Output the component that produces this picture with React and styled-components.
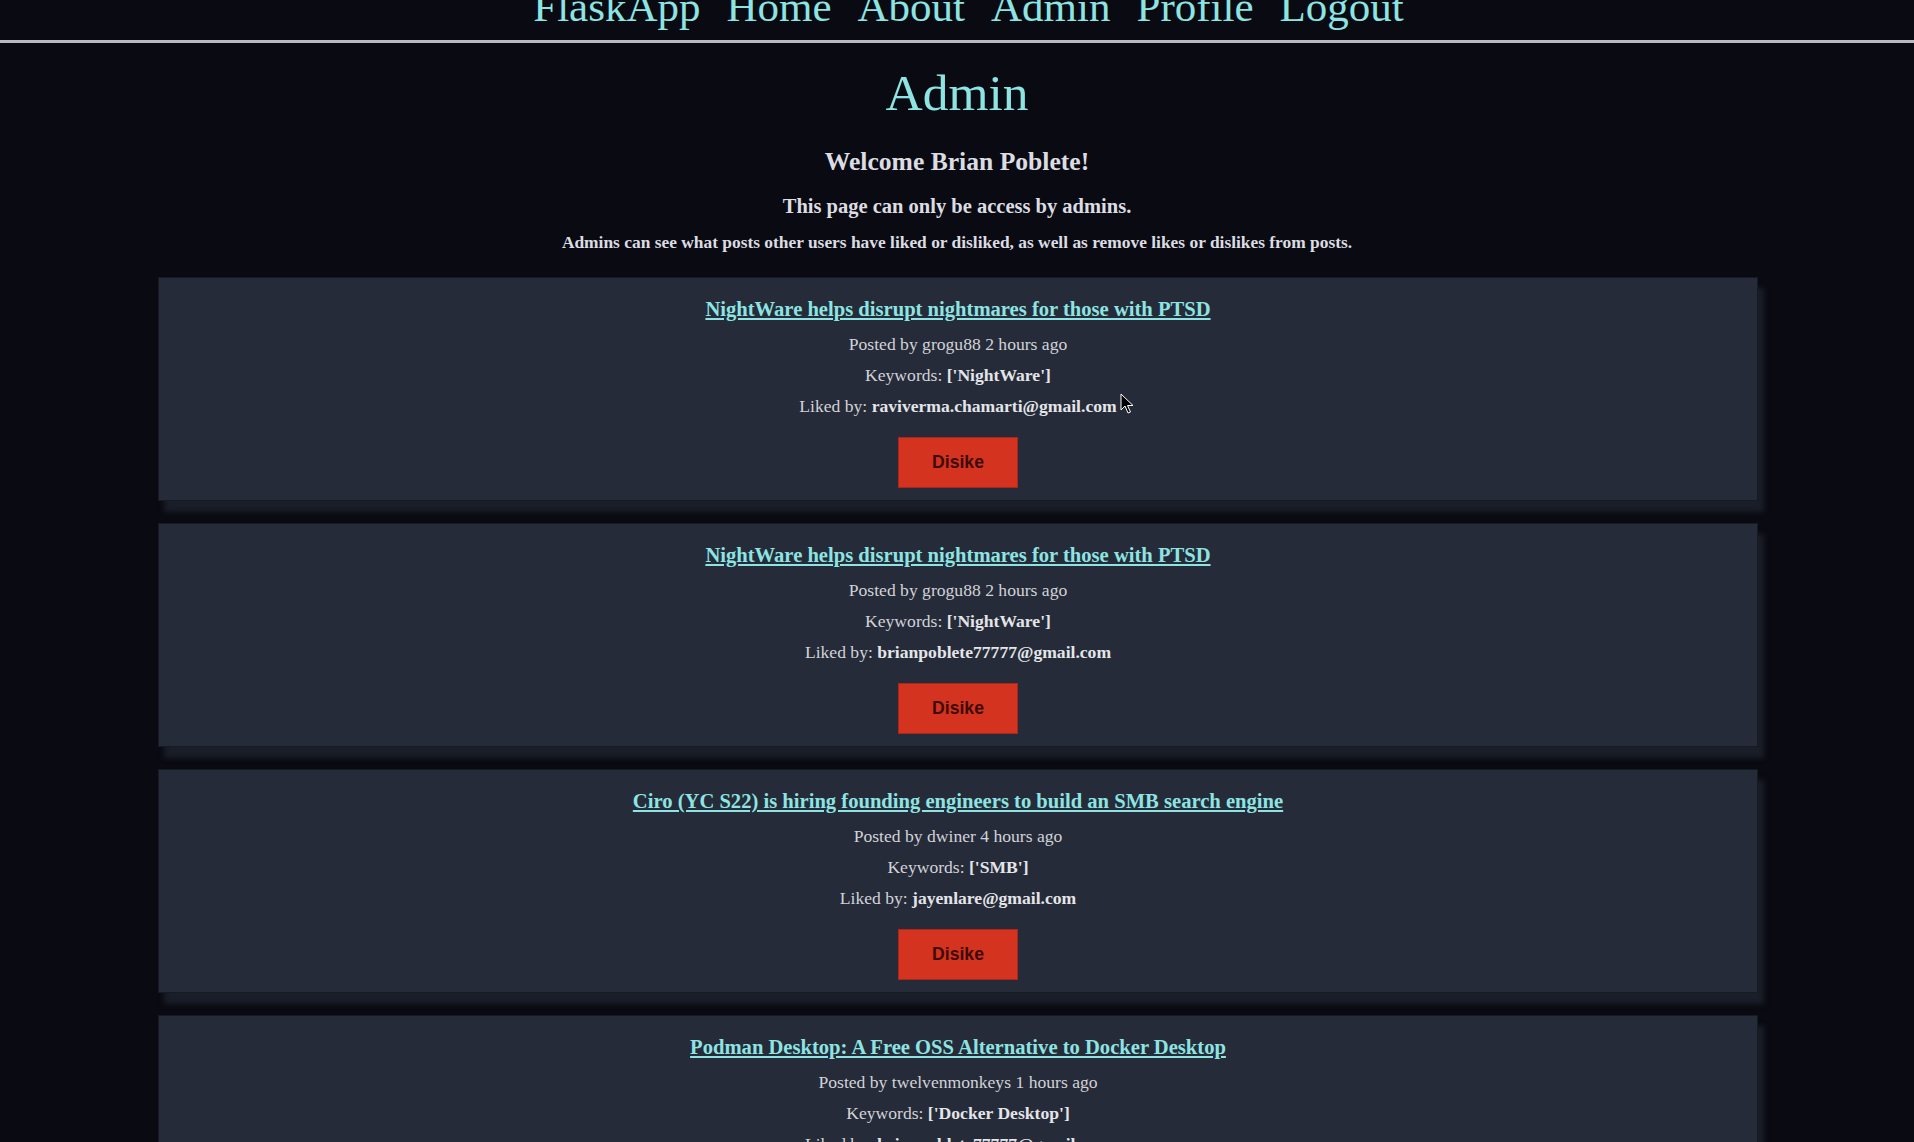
import React from "react";
import styled, { createGlobalStyle } from "styled-components";

const GlobalStyle = createGlobalStyle`
  html, body {
    margin: 0;
    padding: 0;
    background: #0a0b12;
  }
  body {
    font-family: "Liberation Serif", "Times New Roman", serif;
    color: #d2d3d8;
  }
`;

const Page = styled.div`
  height: 100vh;
  overflow: hidden;
  position: relative;
  background: #0a0b12;
`;

const Nav = styled.nav`
  display: flex;
  justify-content: center;
  gap: 26px;
  margin-top: -17px;
  padding: 0 0 9px 23px;
  border-bottom: 3px solid #b9bac2;
  font-size: 43px;
  line-height: 48px;
`;

const NavLink = styled.a`
  color: #8de4e2;
  text-decoration: none;
`;

const Header = styled.header`
  display: flex;
  flex-direction: column;
  align-items: center;
  text-align: center;
`;

const Title = styled.h1`
  margin: 20px 0 0;
  font-size: 51.5px;
  line-height: 60px;
  font-weight: normal;
  color: #8de4e2;
`;

const Heading = styled.div`
  margin-top: ${(p) => p.$mt}px;
  font-size: ${(p) => p.$size}px;
  line-height: ${(p) => p.$lh}px;
  font-weight: bold;
  color: #dcdde2;
`;

const List = styled.main`
  display: flex;
  flex-direction: column;
  gap: 22px;
  width: 1600px;
  margin: 25px 0 0 calc(50% - 799px);
`;

const Card = styled.article`
  display: flex;
  flex-direction: column;
  align-items: center;
  background: #252b38;
  border: 1px solid #161a23;
  box-shadow: 6px 11px 5px #1a1e28;
  padding: 19px 0 12px;
  text-align: center;
`;

const PostTitle = styled.a`
  font-size: 20.6px;
  line-height: 24px;
  font-weight: bold;
  color: #8de4e2;
  text-decoration: underline;
  text-underline-offset: 2px;
`;

const Meta = styled.p`
  margin: ${(p) => p.$mt}px 0 0;
  font-size: 17.6px;
  line-height: 20px;
  color: #d2d3d8;

  b {
    color: #e4e5e9;
  }
`;

const DislikeButton = styled.button`
  margin-top: 21px;
  width: 120px;
  height: 51px;
  background: #d4331f;
  border: 1px solid #a8281a;
  color: #3e0b08;
  font-family: "Liberation Sans", Arial, sans-serif;
  font-weight: bold;
  font-size: 17.6px;
  cursor: pointer;
`;

const Cursor = styled.svg`
  position: absolute;
  left: 1120px;
  top: 393px;
  width: 14px;
  height: 22px;
`;

const posts = [
  {
    title: "NightWare helps disrupt nightmares for those with PTSD",
    author: "grogu88",
    age: "2 hours ago",
    keywords: "['NightWare']",
    liked: "raviverma.chamarti@gmail.com",
  },
  {
    title: "NightWare helps disrupt nightmares for those with PTSD",
    author: "grogu88",
    age: "2 hours ago",
    keywords: "['NightWare']",
    liked: "brianpoblete77777@gmail.com",
  },
  {
    title:
      "Ciro (YC S22) is hiring founding engineers to build an SMB search engine",
    author: "dwiner",
    age: "4 hours ago",
    keywords: "['SMB']",
    liked: "jayenlare@gmail.com",
  },
  {
    title: "Podman Desktop: A Free OSS Alternative to Docker Desktop",
    author: "twelvenmonkeys",
    age: "1 hours ago",
    keywords: "['Docker Desktop']",
    liked: "brianpoblete77777@gmail.com",
  },
];

export default function App() {
  return (
    <Page>
      <GlobalStyle />
      <Nav>
        <NavLink href="#">FlaskApp</NavLink>
        <NavLink href="#">Home</NavLink>
        <NavLink href="#">About</NavLink>
        <NavLink href="#">Admin</NavLink>
        <NavLink href="#">Profile</NavLink>
        <NavLink href="#">Logout</NavLink>
      </Nav>
      <Header>
        <Title>Admin</Title>
        <Heading $mt={24} $size={25.6} $lh={30}>
          Welcome Brian Poblete!
        </Heading>
        <Heading $mt={17} $size={20.5} $lh={24}>
          This page can only be access by admins.
        </Heading>
        <Heading $mt={14} $size={17.4} $lh={20}>
          Admins can see what posts other users have liked or disliked, as well
          as remove likes or dislikes from posts.
        </Heading>
      </Header>
      <List>
        {posts.map((p, i) => (
          <Card key={i}>
            <PostTitle href="#">{p.title}</PostTitle>
            <Meta $mt={13}>
              Posted by {p.author} {p.age}
            </Meta>
            <Meta $mt={11}>
              Keywords: <b>{p.keywords}</b>
            </Meta>
            <Meta $mt={11}>
              Liked by: <b>{p.liked}</b>
            </Meta>
            <DislikeButton>Disike</DislikeButton>
          </Card>
        ))}
      </List>
      <Cursor viewBox="0 0 14 22">
        <path
          d="M1 1 L1 17 L5 13 L8 20 L10.5 19 L7.5 12.5 L13 12.5 Z"
          fill="#000"
          stroke="#fff"
          strokeWidth="1"
          strokeLinejoin="round"
        />
      </Cursor>
    </Page>
  );
}
